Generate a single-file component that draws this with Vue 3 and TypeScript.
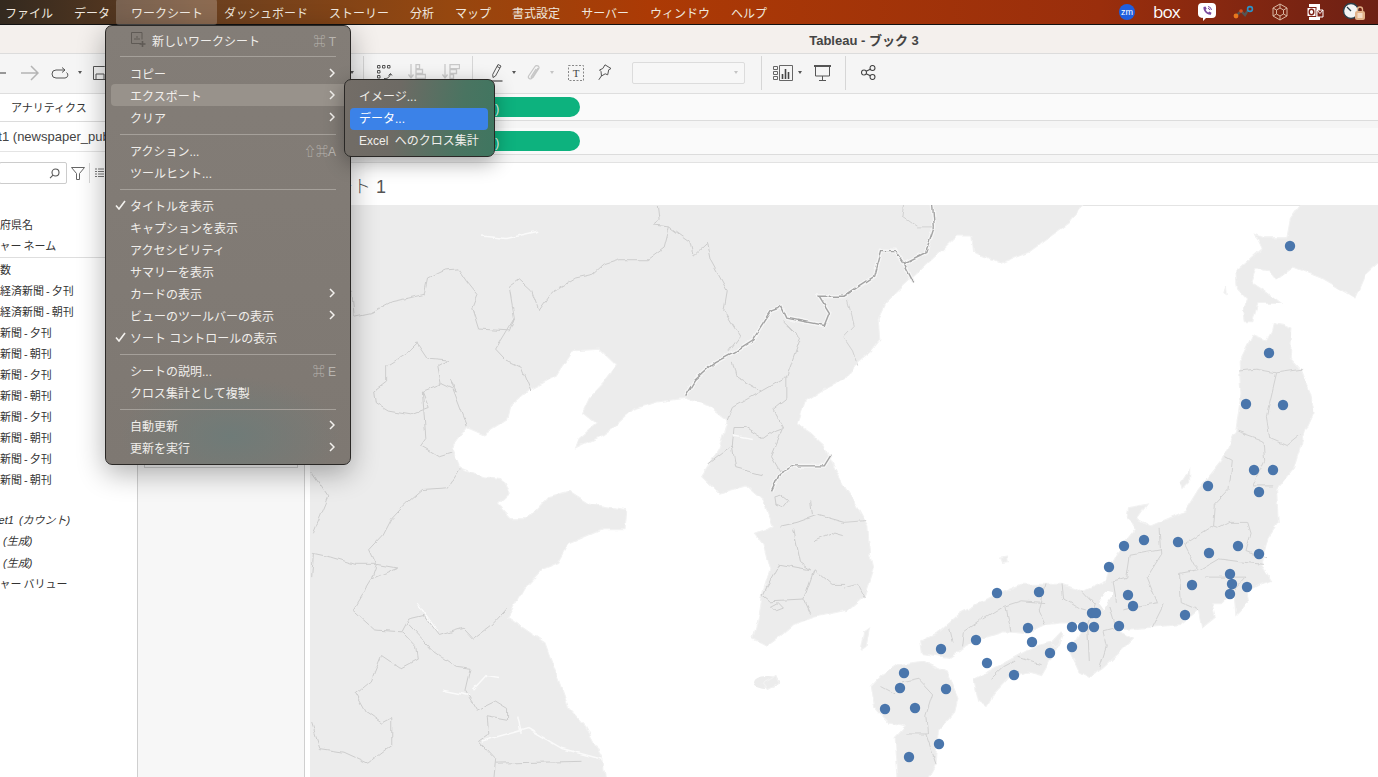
<script setup lang="ts">
type MenuRow = { label?: string; check?: boolean; keys?: string; arrow?: boolean; active?: boolean; sep?: boolean; icon?: boolean };

const menubar = ['ファイル', 'データ', 'ワークシート', 'ダッシュボード', 'ストーリー', '分析', 'マップ', '書式設定', 'サーバー', 'ウィンドウ', 'ヘルプ'];

const menu: MenuRow[] = [
  { label: '新しいワークシート', keys: '⌘ T', icon: true },
  { sep: true },
  { label: 'コピー', arrow: true },
  { label: 'エクスポート', arrow: true, active: true },
  { label: 'クリア', arrow: true },
  { sep: true },
  { label: 'アクション...', keys: '⇧⌘A' },
  { label: 'ツールヒント...' },
  { sep: true },
  { label: 'タイトルを表示', check: true },
  { label: 'キャプションを表示' },
  { label: 'アクセシビリティ' },
  { label: 'サマリーを表示' },
  { label: 'カードの表示', arrow: true },
  { label: 'ビューのツールバーの表示', arrow: true },
  { label: 'ソート コントロールの表示', check: true },
  { sep: true },
  { label: 'シートの説明...', keys: '⌘ E' },
  { label: 'クロス集計として複製' },
  { sep: true },
  { label: '自動更新', arrow: true },
  { label: '更新を実行', arrow: true },
];

const dimensions = [
  { text: '都道府県名', shift: -22 },
  { text: 'メジャー ネーム', shift: -22 },
];
const papers = [
  { text: 'レコード数', shift: -44 },
  { text: '日本経済新聞 - 夕刊', shift: -22 },
  { text: '日本経済新聞 - 朝刊', shift: -22 },
  { text: '朝日新聞 - 夕刊', shift: -22 },
  { text: '朝日新聞 - 朝刊', shift: -22 },
  { text: '毎日新聞 - 夕刊', shift: -22 },
  { text: '毎日新聞 - 朝刊', shift: -22 },
  { text: '読売新聞 - 夕刊', shift: -22 },
  { text: '読売新聞 - 朝刊', shift: -22 },
  { text: '産経新聞 - 夕刊', shift: -22 },
  { text: '産経新聞 - 朝刊', shift: -22 },
];
const measures = [
  { text: 'Sheet1 (カウント)', shift: -21, italic: true },
  { text: '緯度 (生成)', shift: -24, italic: true },
  { text: '経度 (生成)', shift: -24, italic: true },
  { text: 'メジャー バリュー', shift: -22, italic: false },
];

// land outlines, in a 3136x1568 space stretched over the map
const mainland =
  'M-20 -20 2268 -20 2268 0 2228 50 2168 90 2108 130 2028 160 2008 150 1948 130 1943 85 1898 85 1848 130 1768 200 1688 270 1668 310 1673 370 1648 400 1608 430 1568 480 ' +
  '1500 510 1450 540 1430 600 1470 625 1510 660 1540 720 1568 770 1608 830 1638 880 1643 960 1653 1000 1628 1070 1578 1110 ' +
  '1480 1130 1420 1150 1370 1190 1340 1210 1300 1190 1320 1120 1330 1060 1350 1000 1330 930 1305 900 1360 880 1330 810 1280 770 1200 790 1150 745 1200 670 1225 590 ' +
  '1170 550 1100 530 1020 540 950 560 890 610 860 630 780 665 790 640 840 600 800 570 820 530 860 490 900 440 850 395 770 400 720 470 640 510 590 550 580 590 510 630 460 610 415 665 440 720 ' +
  '510 745 560 750 585 790 550 820 590 860 640 860 700 800 760 785 820 820 930 835 925 890 860 890 760 930 730 980 680 1000 630 1050 580 1130 690 1200 760 1380 810 1430 860 1520 870 1590 -20 1590Z';

const islands = [
  '1340 -20 1340 0 1310 40 1300 90 1230 90 1205 80 1225 120 1150 180 1155 230 1185 260 1170 290 1175 320 1200 320 1215 270 1285 270 1235 235 1195 210 1210 175 1250 180 1270 205 1320 170 1400 200 1500 255 1530 190 1590 140 1590 -20',
  '1260 325 1290 330 1315 340 1310 420 1340 450 1370 520 1380 570 1355 620 1330 690 1320 720 1270 780 1275 870 1245 910 1225 985 1255 1030 1220 1040 1180 1060 1185 1090 1150 1125 1145 1060 1110 1090 1080 1090 1090 1130 1050 1160 1040 1110 990 1150 870 1160 800 1165 850 1190 760 1270 720 1295 690 1280 660 1220 690 1180 710 1150 640 1145 600 1150 540 1175 470 1170 400 1190 350 1215 310 1240 230 1230 225 1195 280 1170 340 1120 430 1075 520 1040 640 1040 700 1060 770 1030 780 990 800 955 830 920 860 885 830 860 835 830 890 820 860 860 900 880 1000 840 1040 780 1110 700 1150 620 1165 520 1160 430 1200 355 1240 370 1255 345',
  '380 1300 460 1260 510 1235 560 1210 640 1190 620 1225 580 1290 540 1280 490 1290 440 1340 420 1375 395 1360',
  '160 1260 230 1250 300 1280 335 1350 325 1390 280 1440 270 1530 235 1590 160 1590 150 1460 180 1430 130 1420 90 1380 80 1320 110 1290',
  '990 760 1015 725 1015 760 995 780',
  '60 1170 75 1160 65 1210 50 1220',
  '1115 240 1120 225 1122 245',
  '-240 1310 -200 1290 -190 1310 -225 1328',
  '460 968 480 965 482 978 465 980',
  '610 1200 640 1170 645 1180 620 1215',
];

const borders = [
  '1020 0 1025 40 1005 55 1055 60 1040 115 990 150 910 150 860 165 830 190 780 200 710 240 672 290 650 235 615 205 585 225 600 310 585 345 495 340 475 280 490 245 460 210 435 175 395 178 345 200 335 245 290 255 240 265 180 295 130 305 122 235',
  '1055 60 1115 100 1125 140 1165 105 1175 150 1225 235 1215 290 1262 360 1230 400',
  '600 310 545 395 575 425 620 445 648 510',
  '315 378 345 420 405 425 375 440 385 490 330 510 350 555 295 575 230 565 195 545 190 510 225 485 225 440 285 405 315 378',
  '385 490 430 510 410 480 445 565 462 605',
  '330 510 340 640 325 660 380 690 415 680',
  '440 725 405 775 330 780 280 820 240 860 215 905 175 945 195 985 130 985 60 965 10 955 5 1020',
  '5 730 55 800 10 900',
  '195 985 180 1025 255 995 195 985',
  '180 1025 125 1110 190 1165 270 1170 290 1135 335 1125 380 1180 450 1160 480 1190 530 1155 580 1105',
  '270 1170 310 1210 315 1245 265 1270 210 1235 180 1305 135 1340 165 1390 210 1420 240 1405 240 1480 170 1530 100 1500 30 1490 5 1420',
  '290 1150 360 1220 430 1265 470 1270 455 1330 490 1385 545 1360 580 1380 580 1410 520 1400 525 1450 495 1470 545 1520 540 1568',
  '545 1530 800 1525',
  '1240 430 1250 470 1325 510 1240 555 1225 590',
  '1325 510 1400 470 1440 365 1390 320',
  '1400 470 1400 530 1360 560 1390 610 1360 620 1330 640 1280 610 1245 610 1240 660 1250 720 1330 740',
  '1240 660 1170 710',
  '1390 610 1355 690 1380 730',
  '1380 880 1430 870 1490 850 1568 870',
  '1420 890 1440 980 1470 1000 1380 985 1340 1050 1330 1070 1350 1085 1450 1080 1470 1120',
  '1480 1000 1450 1080',
  '1480 1000 1530 1040 1568 1040',
  '1470 810 1475 850',
  '1480 920 1530 900 1568 910',
  '1365 800 1385 795 1405 810 1390 828 1368 820 1365 800',
  '1355 1100 1375 1090 1390 1105 1370 1112 1355 1100',
];

const japanBorders = [
  '1160 455 1210 450 1270 460 1345 450',
  '1270 460 1240 580 1250 640 1300 660 1340 630',
  '1155 620 1230 645 1235 700 1200 770 1260 770',
  '1120 690 1140 700 1130 780 1090 820 1085 880 1100 885 1130 870 1185 870 1195 900 1180 950 1240 970',
  '1085 880 1000 930 1030 985 1045 1000 1100 970 1180 980 1230 985',
  '925 885 930 960 890 1020 920 1090 860 1100 820 1110',
  '1040 1000 985 1010 990 1090 1040 1110',
  '1060 1020 1180 1020 1140 1060',
  '840 960 930 945',
  '840 960 830 1020 790 1030 800 1090',
  '700 1060 735 1095 715 1150 720 1250',
  '640 1040 645 1080 690 1105 710 1110',
  '590 1040 570 1110 590 1150',
  '475 1100 490 1170',
  '470 1100 520 1085 590 1090',
  '410 1130 350 1170 345 1210',
  '310 1160 320 1200',
  '470 1100 410 1135',
  '780 1100 800 1160 760 1170 770 1210 750 1270',
  '940 1095 905 1160',
  '510 1240 580 1260',
  '430 1300 470 1265 500 1250',
  '170 1310 220 1300 260 1340 240 1400 245 1450 180 1450',
  '240 1450 270 1530',
  '110 1320 150 1340',
  '175 0 170 30 215 60 265 60',
  '0 360 30 330 10 260',
  '0 365 25 400 40 440',
  '0 870 65 865',
  '0 1050 40 1040 60 1075',
];

const darkBorders = [
  '1100 525 1130 480 1190 430 1250 400 1300 370 1355 290 1385 280 1400 310 1510 330 1525 295 1495 250 1568 250 1608 225 1658 195 1678 125 1718 125 1743 160 1773 215',
  '1743 160 1808 130 1833 60 1828 0',
  '1355 785 1380 735 1420 715 1510 715 1530 685',
];

const rivers = [
  '505 85 575 92 670 72',
  '315 1090 375 1170',
  '390 1330 470 1345',
  '480 1330 520 1290 555 1295',
  '505 1470 640 1435 740 1490 860 1520',
  '610 1400 620 1450',
  '1240 630 1300 640',
];

const dots: [number, number][] = [
  [1290, 246], [1269, 353], [1246, 404], [1283, 405], [1254, 470], [1273, 470], [1259, 492], [1208, 486],
  [1144, 540], [1124, 546], [1178, 542], [1209, 553], [1238, 546], [1259, 554], [1109, 567], [1230, 574],
  [1232, 584], [1230, 594], [1247, 587], [1192, 585], [1128, 595], [1133, 606], [1185, 615], [997, 593],
  [1039, 592], [1092, 613], [1096, 613], [1028, 628], [1072, 627], [1083, 627], [1094, 627], [1119, 626],
  [1032, 642], [1050, 653], [1072, 647], [976, 640], [941, 649], [987, 663], [1014, 675], [904, 673],
  [900, 688], [946, 689], [885, 709], [915, 708], [939, 744], [909, 757],
];
</script>

<template>
  <div class="screen">
    <header class="menubar">
      <span v-for="(m, i) in menubar" :key="m" :class="['menubar-item', { open: i === 2 }]">{{ m }}</span>
      <div class="tray">
        <svg class="tray-zoom" width="18" height="18" viewBox="0 0 18 18">
          <circle cx="9" cy="9" r="8" fill="#1f5fe0" />
          <text x="9" y="11.5" text-anchor="middle" font-size="9" fill="#fff">zm</text>
        </svg>
        <span class="tray-box">box</span>
        <svg class="tray-viber" width="20" height="20" viewBox="0 0 20 20">
          <path d="M5 1h10a4 4 0 0 1 4 4v7a4 4 0 0 1-4 4H9l-3 3v-3.2A4 4 0 0 1 1 12V5a4 4 0 0 1 4-4z" fill="#fff" />
          <path d="M6.500 5l2-.6 1.200 2.400-1 1c.4 1.200 1.400 2.200 2.600 2.700l1-1 2.200 1.300-.7 1.900c-3.600.6-8-3.700-7.300-7.700z" fill="#7a4a9c" />
          <path d="M11 4.500a4 4 0 0 1 3.500 3.500M11 6.300a2.200 2.200 0 0 1 1.800 1.800" fill="none" stroke="#7a4a9c" />
        </svg>
        <svg class="tray-flow" width="22" height="14" viewBox="0 0 22 14">
          <path d="M3 11 8 6l4 4 3-5" fill="none" stroke="#555" stroke-width="2.400" />
          <circle cx="3" cy="11" r="2.400" fill="#e8781e" />
          <circle cx="8" cy="6" r="1.800" fill="#d9501e" />
          <circle cx="17" cy="4" r="2.400" fill="none" stroke="#2c93c9" stroke-width="1.600" />
        </svg>
        <svg class="tray-hex" width="18" height="18" viewBox="0 0 18 18" fill="none" stroke="#d9b7a2" stroke-width="1">
          <path d="M9 1l7 4v8l-7 4-7-4V5z" />
          <path d="M9 5l3.500 2v4L9 13l-3.500-2V7zM9 1v4M16 5l-3.500 2M16 13l-3.500-2M9 17v-4M2 13l3.500-2M2 5l3.500 2" />
        </svg>
        <svg class="tray-outlook" width="18" height="18" viewBox="0 0 18 18">
          <rect x="3" y="1" width="11" height="16" fill="#fff" />
          <rect x="1" y="4.500" width="9" height="9" fill="#fff" stroke="#7d2015" />
          <ellipse cx="5.500" cy="9" rx="2.300" ry="2.800" fill="none" stroke="#7d2015" stroke-width="1.400" />
          <path d="M11 7l6 0v7h-6z" fill="#7d2015" stroke="#fff" />
          <path d="M11 7l3 3.500L17 7" fill="none" stroke="#fff" />
        </svg>
        <svg class="tray-clock" width="24" height="20" viewBox="0 0 24 20">
          <circle cx="9" cy="9" r="7.500" fill="#f4f4f4" stroke="#2d3f4a" stroke-width="1.400" />
          <path d="M9 9 5 5" stroke="#2d3f4a" stroke-width="1.200" />
          <rect x="13" y="9" width="10" height="9" rx="2" fill="#e2b28a" />
          <path d="M15.500 9V7.500a2.500 2.500 0 0 1 5 0V9" fill="none" stroke="#e2b28a" stroke-width="1.400" />
          <rect x="15.500" y="11" width="5" height="5" fill="#f5dcc6" />
        </svg>
      </div>
    </header>

    <div class="titlebar">Tableau - ブック 3</div>

    <div class="toolbar">
      <svg class="t-back" width="7" height="4" viewBox="0 0 7 4"><path d="M0 2h6" stroke="#777" stroke-width="1.500" /></svg>
      <svg class="t-forward" width="18" height="16" viewBox="0 0 18 16" fill="none" stroke="#b4b4b4" stroke-width="1.500"><path d="M0 8h17M10 1l7 7-7 7" /></svg>
      <svg class="t-cycle" width="18" height="12" viewBox="0 0 18 12" fill="none" stroke="#555" stroke-width="1"><path d="M14 3H5a4 4 0 0 0 0 8h9a3 3 0 0 0 1.500-5.500M11 .5 14 3l-3 2.500" /></svg>
      <i class="caret t-cycle-caret"></i>
      <svg class="t-save" width="14" height="14" viewBox="0 0 14 14" fill="none" stroke="#555"><path d="M.5.500h11l2 2v11H.5z" /><path d="M3 13.500V8h8v5.500" /></svg>
      <i class="caret t-hidden-caret"></i>
      <span class="t-sep t-sep-a"></span>
      <svg class="t-swap" width="16" height="16" viewBox="0 0 16 16" fill="none" stroke="#555">
        <path d="M.5.500h2.500v2.500H.5zM5.500.500H8v2.500H5.500zM10.500.500H13v2.500h-2.500zM.5 5.500h2.500V8H.5zM.5 10.500h2.500V13H.5z" />
        <path d="M7 13.500c3 .5 5.500-1 6.500-4.500M11.500 10.500l2-2 1.500 2" />
      </svg>
      <svg class="t-sort-a" width="18" height="17" viewBox="0 0 18 17" fill="none" stroke="#c9c9c9" stroke-width="1.300">
        <path d="M3 0v13M.5 10.500 3 14l2.500-3.500M8 .7h3.500v4H8zM8 5.500h6.500v4H8zM8 10.500h9.500v4H8z" />
      </svg>
      <svg class="t-sort-b" width="18" height="17" viewBox="0 0 18 17" fill="none" stroke="#c9c9c9" stroke-width="1.300">
        <path d="M3 0v13M.5 10.500 3 14l2.500-3.500M8 .7h9.500v4H8zM8 5.500h6.500v4H8zM8 10.500h3.500v4H8z" />
      </svg>
      <span class="t-sep t-sep-b"></span>
      <svg class="t-pen" width="14" height="19" viewBox="0 0 14 19" fill="none" stroke="#555">
        <path d="M8 1.500l3 1.500-5.500 10-2.500 1.500-.3-3zM7 3.500l3 1.500" />
        <path d="M.5 18h12" stroke-width="1.300" />
      </svg>
      <i class="caret t-pen-caret"></i>
      <svg class="t-clip" width="14" height="18" viewBox="0 0 14 18" fill="none" stroke="#c6c6c6" stroke-width="1.200">
        <path d="M11 4 5 14c-1.200 2-4.600.3-3.400-2L8 2.500c1.300-2 5-.4 3.800 2L6 13.500c-.7 1-2.200.3-1.700-.9L9 5" />
      </svg>
      <i class="caret caret-light t-clip-caret"></i>
      <svg class="t-textbox" width="16" height="16" viewBox="0 0 16 16">
        <rect x=".5" y=".5" width="15" height="15" fill="none" stroke="#888" stroke-dasharray="2 1.500" />
        <text x="8" y="12" text-anchor="middle" font-size="11" fill="#444" font-family="Liberation Serif">T</text>
      </svg>
      <svg class="t-pin" width="14" height="17" viewBox="0 0 14 17" fill="none" stroke="#555">
        <path d="M7 .8l6 3.700-2.300 1.300-1 5-2.500-1L3.500 12l-.5-4.500L1.500 6l3.300-1.500z" />
        <path d="M3.700 11.500.8 15.800" />
      </svg>
      <div class="t-select"><i class="caret caret-light"></i></div>
      <span class="t-sep t-sep-c"></span>
      <svg class="t-showme" width="20" height="16" viewBox="0 0 20 16" fill="none" stroke="#666">
        <path d="M.5 1.500h4v3h-4zM.5 6.500h4v3h-4zM.5 11.500h4v3h-4zM6.500.500h13v15h-13z" />
        <path d="M9.500 14v-5M12.500 14V4M15.500 14V7" stroke="#444" stroke-width="1.600" />
      </svg>
      <i class="caret t-showme-caret"></i>
      <svg class="t-present" width="17" height="16" viewBox="0 0 17 16" fill="none" stroke="#555">
        <path d="M0 1h17" stroke-width="2" />
        <path d="M1.500 1.500h14v9.500h-14zM8.500 11v4M5 15.500h7" />
      </svg>
      <span class="t-sep t-sep-d"></span>
      <svg class="t-share" width="15" height="15" viewBox="0 0 15 15" fill="none" stroke="#444" stroke-width="1.100">
        <circle cx="11.500" cy="3" r="2.500" /><circle cx="3" cy="7.500" r="2.500" /><circle cx="11.500" cy="12" r="2.500" />
        <path d="M5.200 6.300 9.300 4.200M5.200 8.700l4.100 2.100" />
      </svg>
    </div>

    <main class="workspace">
      <aside class="data-pane">
        <div class="pane-tab">アナリティクス</div>
        <div class="pane-source">Sheet1 (newspaper_publishers)</div>
        <div class="pane-search">
          <div class="search-box">
            <svg width="11" height="11" viewBox="0 0 11 11" fill="none" stroke="#555" stroke-width="1.100"><circle cx="6.500" cy="4.500" r="3.500" /><path d="M4 7.200 1 10.200" /></svg>
          </div>
          <svg class="funnel" width="14" height="13" viewBox="0 0 14 13" fill="none" stroke="#666"><path d="M.5.500h13L8.500 6.500v6h-3v-6z" /></svg>
          <span class="search-sep"></span>
          <svg class="list-icon" width="9" height="11" viewBox="0 0 9 11" stroke="#777"><path d="M0 1h2M3 1h6M0 3.500h2M3 3.500h6M0 6h2M3 6h6M0 8.500h2M3 8.500h6" /></svg>
        </div>
        <div class="field-list">
          <div v-for="f in dimensions" :key="f.text" class="field" :style="{ marginLeft: f.shift + 'px' }">{{ f.text }}</div>
          <div class="field-rule"></div>
          <div v-for="f in papers" :key="f.text" class="field" :style="{ marginLeft: f.shift + 'px' }">{{ f.text }}</div>
          <div class="field-gap"></div>
          <div v-for="f in measures" :key="f.text" :class="['field', { italic: f.italic }]" :style="{ marginLeft: f.shift + 'px' }">{{ f.text }}</div>
        </div>
      </aside>

      <aside class="cards-pane">
        <div class="marks-card"></div>
      </aside>

      <section class="sheet">
        <div class="shelf"><span class="pill">経度 (生成)</span></div>
        <div class="shelf"><span class="pill">緯度 (生成)</span></div>
        <h1 class="sheet-title">シート 1</h1>
        <svg class="map" viewBox="310 205 1068 572" preserveAspectRatio="none">
          <defs>
            <filter id="rough" filterUnits="userSpaceOnUse" x="310" y="205" width="1068" height="572">
              <feTurbulence type="fractalNoise" baseFrequency="0.09" numOctaves="2" seed="4" result="noise" />
              <feDisplacementMap in="SourceGraphic" in2="noise" scale="5" xChannelSelector="R" yChannelSelector="G" />
              <feGaussianBlur stdDeviation="0.35" />
            </filter>
          </defs>
          <g filter="url(#rough)">
            <g transform="translate(310 205) scale(.3406 .3648)">
              <path :d="mainland" fill="#ececec" stroke="#f2f2f2" stroke-width="3" />
              <ellipse cx="1342" cy="1308" rx="38" ry="17" fill="#ececec" />
              <polyline v-for="r in rivers" :key="r" :points="r" fill="none" stroke="#fafafa" stroke-width="1.500" vector-effect="non-scaling-stroke" />
              <polyline v-for="b in borders" :key="b" :points="b" fill="none" stroke="#cdcdcd" stroke-width="1" vector-effect="non-scaling-stroke" />
              <polyline v-for="b in darkBorders" :key="b" :points="b" fill="none" stroke="#f6f6f6" stroke-width="4" vector-effect="non-scaling-stroke" />
              <polyline v-for="b in darkBorders" :key="'d' + b" :points="b" fill="none" stroke="#a3a3a3" stroke-width="1.400" vector-effect="non-scaling-stroke" />
              <g transform="translate(1568 0)">
                <polygon v-for="p in islands" :key="p" :points="p" fill="#ececec" stroke="#f2f2f2" stroke-width="3" />
                <path d="M745 1090 770 1060 790 1065 760 1110Z" fill="#fff" />
                <polyline v-for="b in japanBorders" :key="b" :points="b" fill="none" stroke="#d2d2d2" stroke-width="1" vector-effect="non-scaling-stroke" />
              </g>
            </g>
          </g>
          <circle v-for="d in dots" :key="d.join()" :cx="d[0]" :cy="d[1]" r="5.200" fill="#4a76ac" />
        </svg>
      </section>
    </main>

    <nav class="menu">
      <template v-for="(row, i) in menu" :key="i">
        <div v-if="row.sep" class="menu-sep"></div>
        <div v-else :class="['menu-row', { active: row.active }]">
          <svg v-if="row.check" class="menu-check" width="11" height="10" viewBox="0 0 11 10" fill="none" stroke="#f3f1ee" stroke-width="1.600"><path d="M1 5.500 4 9l6-8" /></svg>
          <svg v-if="row.icon" class="menu-icon" width="15" height="16" viewBox="0 0 15 16" fill="none" stroke="#5f5a55">
            <path d="M10 11.500H.5V.5h10.500v7" />
            <path d="M4 8V6M6 8V4M8 8V6" />
            <path d="M11.500 9v6M8.500 12h6" stroke-width="1.600" />
          </svg>
          <span class="menu-label">{{ row.label }}</span>
          <span v-if="row.keys" class="menu-keys">{{ row.keys }}</span>
          <svg v-if="row.arrow" class="menu-arrow" width="6" height="10" viewBox="0 0 6 10" fill="none" stroke="#f3f1ee" stroke-width="1.500"><path d="M1 1l4 4-4 4" /></svg>
        </div>
      </template>
    </nav>

    <nav class="submenu">
      <div class="sub-row">イメージ...</div>
      <div class="sub-row selected">データ...</div>
      <div class="sub-row">Excel へのクロス集計</div>
    </nav>
  </div>
</template>

<style scoped>
.screen {
  position: relative;
  width: 1378px;
  height: 777px;
  overflow: hidden;
  background: #fff;
  font-family: "Liberation Sans", "Noto Sans CJK JP", sans-serif;
  color: #333;
}

.menubar {
  display: flex;
  align-items: center;
  gap: 21px;
  height: 24px;
  padding-left: 5px;
  box-sizing: content-box;
  border-bottom: 1px solid #111;
  background: linear-gradient(90deg, #33291f 0, #6a4020 200px, #96470f 450px, #ac3a05 650px, #9a2e0c 1100px, #6d2015 1378px);
  font-size: 12px;
  color: #efe7df;
}
.menubar-item {
  position: relative;
  white-space: nowrap;
}
.menubar-item.open::before {
  content: "";
  position: absolute;
  top: -5px;
  bottom: -4px;
  left: -15px;
  right: -14px;
  border-radius: 3px;
  background: rgba(255, 255, 255, 0.22);
}
.tray {
  position: absolute;
  top: 0;
  left: 0;
  height: 24px;
  display: flex;
  align-items: center;
}
.tray-zoom { margin-left: 1118px; }
.tray-zoom text { font-family: "Liberation Sans", sans-serif; }
.tray-box {
  margin-left: 17px;
  width: 28px;
  font-size: 17px;
  line-height: 24px;
  font-family: "Open Sans", sans-serif;
  font-weight: 400;
  letter-spacing: -1px;
  color: #fff;
}
.tray-viber { margin-left: 16px; }
.tray-flow { margin-left: 16px; }
.tray-hex { margin-left: 16px; }
.tray-outlook { margin-left: 17px; }
.tray-clock { margin-left: 18px; }

.titlebar {
  display: flex;
  align-items: center;
  justify-content: center;
  height: 28px;
  padding-left: 350px;
  background: #f4f0ed;
  border-bottom: 1px solid #dcdcdc;
  font-size: 13px;
  font-weight: 700;
  color: #444;
}

.toolbar {
  display: flex;
  align-items: center;
  height: 37px;
  padding-bottom: 2px;
  background: #f5f5f5;
  border-bottom: 1px solid #dedede;
}
.toolbar svg,
.toolbar i,
.t-sep { flex: none; }
.caret {
  display: block;
  width: 0;
  height: 0;
  border-left: 2.5px solid transparent;
  border-right: 2.5px solid transparent;
  border-top: 3px solid #555;
}
.caret-light { border-top-color: #c4c4c4; }
.t-sep {
  display: block;
  width: 1px;
  height: 34px;
  background: #d6d6d6;
}
.t-forward { margin-left: 14px; }
.t-cycle { margin-left: 12px; }
.t-cycle-caret { margin-left: 9px; }
.t-save { margin-left: 11px; }
.t-hidden-caret { margin-left: 243px; }
.t-sep-a { margin-left: 9px; }
.t-swap { margin-left: 13px; }
.t-sort-a { margin-left: 15px; }
.t-sort-b { margin-left: 16px; }
.t-sep-b { margin-left: 12px; }
.t-pen { margin-left: 17px; }
.t-pen-caret { margin-left: 8px; }
.t-clip { margin-left: 11px; }
.t-clip-caret { margin-left: 9px; }
.t-textbox { margin-left: 14px; }
.t-pin { margin-left: 14px; }
.t-select {
  display: flex;
  align-items: center;
  justify-content: flex-end;
  flex: none;
  width: 113px;
  height: 22px;
  margin-left: 20px;
  padding-right: 6px;
  box-sizing: border-box;
  border: 1px solid #dcdcdc;
  border-radius: 2px;
  background: #f7f7f7;
}
.t-sep-c { margin-left: 16px; }
.t-showme { margin-left: 11px; }
.t-showme-caret { margin-left: 5px; }
.t-present { margin-left: 12px; }
.t-sep-d { margin-left: 14px; }
.t-share { margin-left: 15px; }

.workspace {
  display: grid;
  grid-template-columns: 138px 167px 1fr;
  height: 684px;
}

.data-pane {
  overflow: hidden;
  border-right: 1px solid #cfcfcf;
  font-size: 11px;
  white-space: nowrap;
}
.pane-tab {
  height: 27px;
  padding-left: 11px;
  line-height: 28px;
  border-bottom: 1px solid #dcdcdc;
}
.pane-source {
  height: 29px;
  margin-left: -32px;
  line-height: 29px;
  font-size: 13px;
  color: #444;
  border-bottom: 1px solid #e4e4e4;
}
.pane-search {
  display: flex;
  align-items: center;
  height: 22px;
  margin-top: 10px;
}
.search-box {
  display: flex;
  align-items: center;
  justify-content: flex-end;
  width: 68px;
  height: 22px;
  margin-left: -1px;
  padding-right: 2px;
  box-sizing: border-box;
  border: 1px solid #ccc;
  border-radius: 2px;
  background: #fff;
}
.search-box svg { margin-right: 4px; }
.funnel { margin-left: 4px; }
.search-sep {
  width: 1px;
  height: 20px;
  margin-left: 4px;
  background: #d8d8d8;
}
.list-icon { margin-left: 5px; }

.field-list { margin-top: 31px; }
.field {
  height: 21px;
  line-height: 21px;
  word-spacing: -1px;
  color: #333;
}
.field.italic {
  height: 21.3px;
  font-style: italic;
  word-spacing: 2px;
}
.field-rule {
  height: 1px;
  margin-bottom: 2px;
  background: #dedede;
}
.field-gap { height: 19px; }

.cards-pane {
  padding: 0 6px;
  background: #f7f7f7;
  border-right: 1px solid #cfcfcf;
}
.marks-card {
  height: 100px;
  margin-top: 272px;
  border: 1px solid #cfcfcf;
  background: #f7f7f7;
}

.sheet {
  display: flex;
  flex-direction: column;
  min-width: 0;
  background: #fff;
}
.shelf {
  display: flex;
  align-items: center;
  flex: none;
  height: 26px;
  margin-bottom: 7px;
  background: #fafafa;
  border-bottom: 1px solid #dcdcdc;
  box-shadow: 0 7px 0 #f5f5f5;
  font-size: 12px;
}
.pill {
  display: flex;
  align-items: center;
  width: 160px;
  height: 20px;
  margin-left: 115px;
  padding-left: 20px;
  box-sizing: border-box;
  border-radius: 10px;
  background: #0db27e;
  color: #f2fff9;
}
.sheet-title {
  flex: none;
  height: 44px;
  margin: 0;
  padding-left: 12px;
  box-sizing: border-box;
  border-top: 1px solid #e2e2e2;
  border-bottom: 1px solid #e4e4e4;
  font-size: 18px;
  font-weight: 300;
  line-height: 49px;
  color: #555;
}
.map {
  display: block;
  flex: none;
  width: 1068px;
  height: 572px;
  margin-left: 5px;
  margin-top: -1px;
}

.menu {
  position: absolute;
  top: 25px;
  left: 105px;
  width: 246px;
  height: 440px;
  padding: 3px 0;
  box-sizing: border-box;
  border: 1px solid #2a2826;
  border-radius: 7px;
  background:
    radial-gradient(ellipse 110px 60px at 125px 410px, #6f7b78 0, rgba(111, 123, 120, 0) 100%),
    linear-gradient(180deg, #837d77, #7e7872);
  box-shadow: 0 8px 28px rgba(0, 0, 0, 0.32);
  font-size: 12px;
  color: #f0eeeb;
}
.menu-sep {
  height: 1px;
  margin: 6px 14px 4px;
  background: #a5a09a;
}
.menu-sep:nth-child(2) {
  margin-top: 5px;
  margin-bottom: 5px;
}
.menu-row {
  position: relative;
  display: flex;
  align-items: center;
  height: 22px;
  margin: 0 5px;
  padding: 0 9px 0 19px;
  border-radius: 4px;
  white-space: nowrap;
}
.menu-row.active {
  margin-right: 0;
  padding-right: 14px;
  border-radius: 4px 0 0 4px;
  background: #98928b;
}
.menu-check {
  position: absolute;
  left: 4px;
  top: 6px;
}
.menu-icon {
  position: absolute;
  left: 20px;
  top: 3px;
}
.menu-icon + .menu-label { margin-left: 22px; }
.menu-keys {
  margin-left: auto;
  color: #b9b5b0;
  font-size: 12px;
}
.menu-arrow {
  margin-left: auto;
  margin-right: 1px;
}

.submenu {
  position: absolute;
  top: 79px;
  left: 344px;
  width: 151px;
  height: 78px;
  padding: 6px 6px 5px 5px;
  box-sizing: border-box;
  border: 1px solid #2a2826;
  border-radius: 7px;
  background: linear-gradient(100deg, #736d67 0, #6d6a64 35%, #4a7461 75%, #3f7660 100%);
  box-shadow: 0 6px 20px rgba(0, 0, 0, 0.32);
  font-size: 12px;
  color: #f0eeeb;
}
.sub-row {
  height: 22px;
  padding-left: 9px;
  line-height: 22px;
  border-radius: 4px;
  white-space: nowrap;
}
.sub-row:last-child { word-spacing: 3px; }
.sub-row.selected {
  background: #3b82e8;
  color: #fff;
}
</style>

<style>
html,
body {
  margin: 0;
  background: #fff;
}
</style>
